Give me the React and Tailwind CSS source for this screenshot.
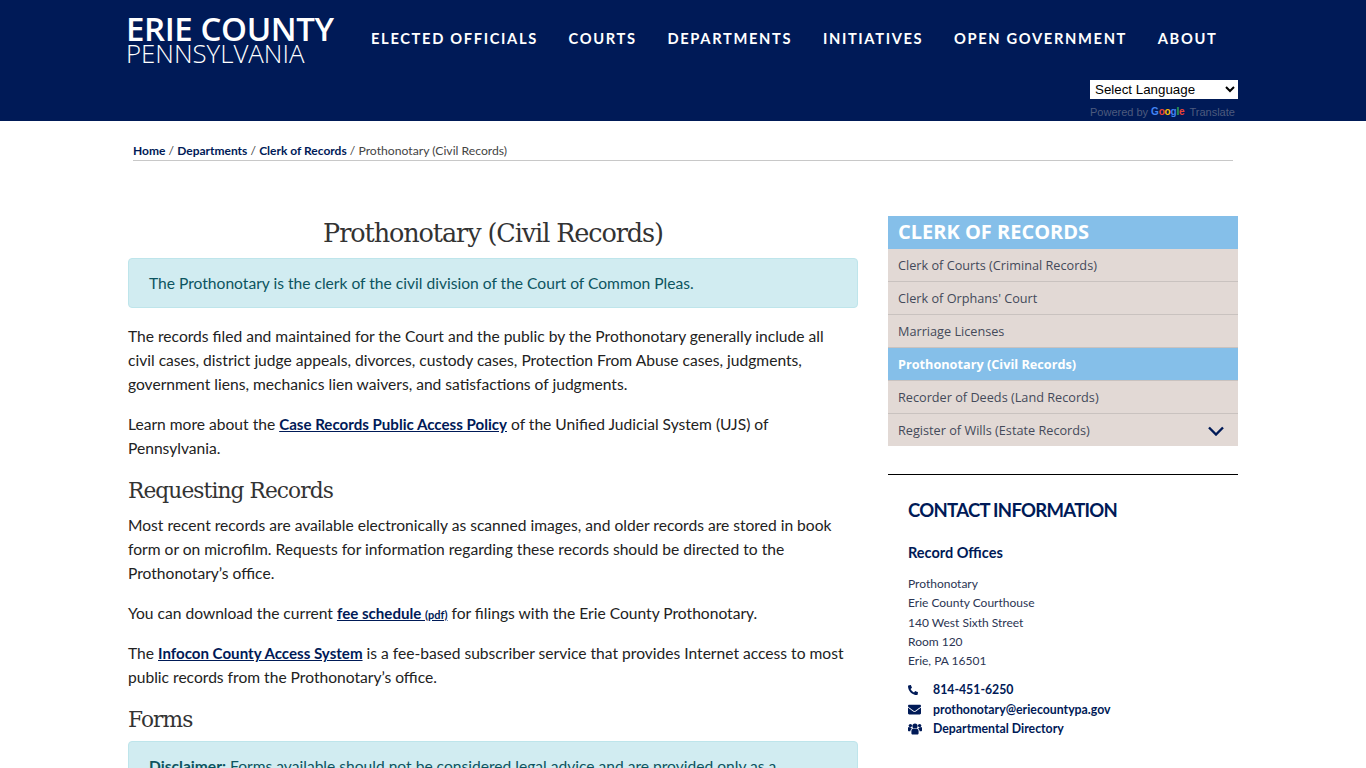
import { FaPhone, FaEnvelope } from 'react-icons/fa';

const NAV = ['ELECTED OFFICIALS', 'COURTS', 'DEPARTMENTS', 'INITIATIVES', 'OPEN GOVERNMENT', 'ABOUT'];

const MENU = [
  { label: 'Clerk of Courts (Criminal Records)' },
  { label: "Clerk of Orphans' Court" },
  { label: 'Marriage Licenses' },
  { label: 'Prothonotary (Civil Records)', active: true },
  { label: 'Recorder of Deeds (Land Records)' },
  { label: 'Register of Wills (Estate Records)', more: true },
];

function A({ children }) {
  return <a className="font-bold text-[15.1px] text-[#001a57] underline">{children}</a>;
}

function Header() {
  return (
    <header className="h-[121px] bg-[#001a57]">
      <div className="mx-auto w-[1110px] relative">
        <div className="flex">
          <a className="block shrink-0 w-[243px] -ml-[2px] pt-[13.5px] text-white font-['Open_Sans',sans-serif]">
            <div className="text-[33px] leading-[29px] font-semibold tracking-[-0.4px] whitespace-nowrap">ERIE COUNTY</div>
            <div className="text-[25.8px] leading-[21px] font-light whitespace-nowrap">PENNSYLVANIA</div>
          </a>
          <nav className="flex ml-[2px] gap-[30.7px] pt-[28px] text-white text-[14.7px] leading-[20px] font-bold tracking-[1.65px] whitespace-nowrap font-['Lato',sans-serif]">
            {NAV.map((n) => <a key={n}>{n}</a>)}
          </nav>
        </div>
        <div className="absolute right-0 top-[80px] w-[148px]">
          <select className="block w-[148px] h-[19px] bg-white text-black text-[13.33px] leading-[15px] pl-[1px] font-['Liberation_Sans',sans-serif]">
            <option>Select Language</option>
          </select>
          <div className="mt-[4px] flex items-center text-[11px] leading-[18px] text-[#4d5b7e] whitespace-nowrap font-['Liberation_Sans',sans-serif]">
            <span>Powered by</span>
            <span className="ml-[3px] font-bold text-[10px] tracking-[-0.2px]">
              <span className="text-[#4285f4]">G</span>
              <span className="text-[#ea4335]">o</span>
              <span className="text-[#fbbc05]">o</span>
              <span className="text-[#4285f4]">g</span>
              <span className="text-[#34a853]">l</span>
              <span className="text-[#ea4335]">e</span>
            </span>
            <span className="ml-[5px]">Translate</span>
          </div>
        </div>
      </div>
    </header>
  );
}

function Breadcrumb() {
  return (
    <div className="mx-auto w-[1100px] h-[40px] pt-[20px] border-b border-[#c8c8c8] text-[12.2px] leading-[20px] text-[#444] whitespace-nowrap">
      <a className="font-bold text-[12px] text-[#001a57]">Home</a> / <a className="font-bold text-[12px] text-[#001a57]">Departments</a> /{' '}
      <a className="font-bold text-[12px] text-[#001a57]">Clerk of Records</a> / Prothonotary (Civil Records)
    </div>
  );
}

function Main() {
  return (
    <main className="w-[730px] text-[#222] text-[15.6px] leading-[24px]">
      <h1 className="pt-[1px] text-center text-[25.5px] leading-[33px] text-[#333] font-['DejaVu_Serif',serif] tracking-[-1.1px]">Prothonotary (Civil Records)</h1>
      <div className="mt-[8px] h-[50px] rounded-[4px] border border-[#bee5eb] bg-[#d1ecf1] px-[20px] py-[12px] text-[#0c5460]">
        The Prothonotary is the clerk of the civil division of the Court of Common Pleas.
      </div>
      <p className="mt-[16px]">
        The records filed and maintained for the Court and the public by the Prothonotary generally include all<br />
        civil cases, district judge appeals, divorces, custody cases, Protection From Abuse cases, judgments,<br />
        government liens, mechanics lien waivers, and satisfactions of judgments.
      </p>
      <p className="mt-[16px]">
        Learn more about the <A>Case Records Public Access Policy</A> of the Unified Judicial System (UJS) of<br />
        Pennsylvania.
      </p>
      <h2 className="mt-[18px] text-[21.7px] leading-[26px] text-[#333] font-['DejaVu_Serif',serif] tracking-[-0.9px]">Requesting Records</h2>
      <p className="mt-[9px]">
        Most recent records are available electronically as scanned images, and older records are stored in book<br />
        form or on microfilm. Requests for information regarding these records should be directed to the<br />
        Prothonotary’s office.
      </p>
      <p className="mt-[16px]">
        You can download the current <A>fee schedule <span className="text-[11px] leading-none">(pdf)</span></A> for filings with the Erie County Prothonotary.
      </p>
      <p className="mt-[16px]">
        The <A>Infocon County Access System</A> is a fee-based subscriber service that provides Internet access to most<br />
        public records from the Prothonotary’s office.
      </p>
      <h2 className="mt-[18px] text-[21.7px] leading-[26px] text-[#333] font-['DejaVu_Serif',serif] tracking-[-0.9px]">Forms</h2>
      <div className="mt-[8px] rounded-[4px] border border-[#bee5eb] bg-[#d1ecf1] px-[20px] py-[12px] text-[#0c5460]">
        <b>Disclaimer:</b> Forms available should not be considered legal advice and are provided only as a
        convenience to the public.
      </div>
    </main>
  );
}

function Sidebar() {
  return (
    <aside className="w-[350px]">
      <div className="h-[33px] bg-[#85bfe9] pl-[10px] text-white text-[20px] leading-[32px] font-bold font-['Open_Sans',sans-serif] whitespace-nowrap">CLERK OF RECORDS</div>
      <ul className="font-['Open_Sans',sans-serif] text-[12.7px] text-[#444a5a]">
        {MENU.map((m) => (
          <li
            key={m.label}
            className={`h-[33px] last:h-[32px] pl-[10px] pr-[14px] pt-[1px] flex items-center justify-between border-b last:border-b-0 border-[#c9c2bf] whitespace-nowrap ${m.active ? 'bg-[#85bfe9] text-white font-bold' : 'bg-[#e2d9d5]'}`}
          >
            <span>{m.label}</span>
            {m.more && (
              <svg width="16" height="10" viewBox="0 0 16 10" fill="none" stroke="#001a57" strokeWidth="2.4">
                <path d="M1 1.5l7 7 7-7" />
              </svg>
            )}
          </li>
        ))}
      </ul>
      <div className="mt-[28px] border-t border-black pl-[20px] pt-[21px] text-[#001a57]">
        <h3 className="text-[18.5px] leading-[28px] font-bold tracking-[-0.7px] font-['Lato',sans-serif] whitespace-nowrap">CONTACT INFORMATION</h3>
        <h4 className="mt-[19px] text-[14.5px] leading-[20px] font-bold font-['Lato',sans-serif]">Record Offices</h4>
        <address className="mt-[11px] not-italic text-[12px] leading-[19.3px] text-[#2b3553] font-['Lato',sans-serif]">
          Prothonotary<br />
          Erie County Courthouse<br />
          140 West Sixth Street<br />
          Room 120<br />
          Erie, PA 16501
        </address>
        <div className="mt-[10px] text-[12.3px] leading-[19.5px] font-bold font-['Lato',sans-serif]">
          <div className="flex items-center"><span className="w-[25px]"><FaPhone className="text-[10px] -scale-x-100" /></span>814-451-6250</div>
          <div className="flex items-center"><span className="w-[25px]"><FaEnvelope className="text-[13px]" /></span>prothonotary@eriecountypa.gov</div>
          <div className="flex items-center">
            <span className="w-[25px]">
              <svg width="14" height="12" viewBox="0 0 14 12" fill="#001a57">
                <circle cx="7" cy="3" r="2.6" />
                <circle cx="2.4" cy="2.6" r="1.7" />
                <circle cx="11.6" cy="2.6" r="1.7" />
                <path d="M3.4 8c0-1.8 1.2-2.6 2-2.6.5.4 1 .6 1.6.6s1.1-.2 1.6-.6c.8 0 2 .8 2 2.6v2.2c0 .9-.6 1.3-1.3 1.3H4.7c-.7 0-1.3-.4-1.3-1.3z" />
                <path d="M0 5.2c0-.8.5-1.2 1-1.2.4.3.9.5 1.4.5h.5c.2.6.6 1 1 1.3-.9.4-1.5 1.3-1.5 2.4H1c-.6 0-1-.4-1-1z" />
                <path d="M14 5.2c0-.8-.5-1.2-1-1.2-.4.3-.9.5-1.4.5h-.5c-.2.6-.6 1-1 1.3.9.4 1.5 1.3 1.5 2.4H13c.6 0 1-.4 1-1z" />
              </svg>
            </span>
            Departmental Directory
          </div>
        </div>
      </div>
    </aside>
  );
}

export default function App() {
  return (
    <div className="h-[768px] overflow-hidden bg-white font-['Lato',sans-serif]">
      <Header />
      <Breadcrumb />
      <div className="mx-auto mt-[55px] w-[1110px] flex justify-between">
        <Main />
        <Sidebar />
      </div>
    </div>
  );
}
